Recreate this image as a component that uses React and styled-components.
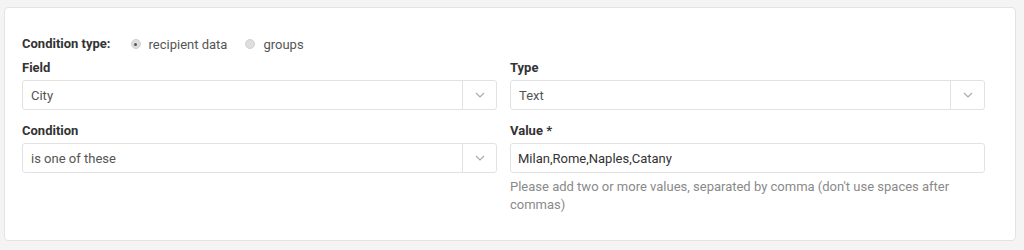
import React from "react";
import styled, { createGlobalStyle } from "styled-components";

const GlobalStyle = createGlobalStyle`
  body {
    margin: 0;
    background: #f4f4f4;
    font-family: Roboto, "Liberation Sans", sans-serif;
  }
`;

const Chevron = () => (
  <svg width="10" height="6" viewBox="0 0 10 6">
    <path d="M1 1l4 4 4-4" fill="none" stroke="#a8a8a8" strokeWidth="1.1" />
  </svg>
);

const App = () => {
  return (
    <Page>
      <GlobalStyle />
      <Card>
        <TypeRow>
          <Label>Condition type:</Label>
          <Radio>
            <RadioDot checked />
            recipient data
          </Radio>
          <Radio>
            <RadioDot />
            groups
          </Radio>
        </TypeRow>
        <Grid>
          <FieldBox>
            <Label>Field</Label>
            <Select>
              <SelectValue>City</SelectValue>
              <Arrow>
                <Chevron />
              </Arrow>
            </Select>
          </FieldBox>
          <FieldBox>
            <Label>Type</Label>
            <Select>
              <SelectValue>Text</SelectValue>
              <Arrow>
                <Chevron />
              </Arrow>
            </Select>
          </FieldBox>
          <FieldBox>
            <Label>Condition</Label>
            <Select>
              <SelectValue>is one of these</SelectValue>
              <Arrow>
                <Chevron />
              </Arrow>
            </Select>
          </FieldBox>
          <FieldBox>
            <Label>Value *</Label>
            <Input>Milan,Rome,Naples,Catany</Input>
            <Help>
              Please add two or more values, separated by comma (don't use spaces after
              commas)
            </Help>
          </FieldBox>
        </Grid>
      </Card>
    </Page>
  );
};

const Page = styled.div`
  padding: 7px 8px 9px 4px;
  height: 250px;
  box-sizing: border-box;
`;

const Card = styled.div`
  background: #fff;
  border: 1px solid #e3e3e3;
  border-radius: 4px;
  height: 234px;
  box-sizing: border-box;
  padding: 27px 30px 0 17px;
`;

const TypeRow = styled.div`
  display: flex;
  align-items: center;
  height: 18px;
  gap: 20px;
`;

const Label = styled.div`
  font-size: 13px;
  font-weight: 700;
  color: #333;
  line-height: 16px;
`;

const Radio = styled.div`
  display: flex;
  align-items: center;
  gap: 8px;
  font-size: 13px;
  color: #555;
  margin-right: -2px;
`;

const RadioDot = styled.span`
  width: 10px;
  height: 10px;
  border-radius: 50%;
  background: #dedede;
  border: 1px solid #d0d0d0;
  box-sizing: border-box;
  position: relative;
  &::after {
    content: "";
    display: ${(p) => (p.checked ? "block" : "none")};
    position: absolute;
    left: 2.5px;
    top: 2.5px;
    width: 3px;
    height: 3px;
    border-radius: 50%;
    background: #555;
  }
`;

const Grid = styled.div`
  display: grid;
  grid-template-columns: 1fr 1fr;
  column-gap: 13px;
  row-gap: 13px;
  margin-top: 7px;
`;

const FieldBox = styled.div`
  display: flex;
  flex-direction: column;
  gap: 4px;
`;

const Select = styled.div`
  display: flex;
  height: 30px;
  border: 1px solid #e2e2e2;
  border-radius: 3px;
  box-sizing: border-box;
`;

const SelectValue = styled.div`
  flex: 1;
  display: flex;
  align-items: center;
  padding-left: 8px;
  font-size: 13px;
  color: #555;
`;

const Arrow = styled.div`
  width: 33px;
  border-left: 1px solid #e2e2e2;
  display: flex;
  align-items: center;
  justify-content: center;
`;

const Input = styled.div`
  height: 30px;
  border: 1px solid #e2e2e2;
  border-radius: 3px;
  box-sizing: border-box;
  display: flex;
  align-items: center;
  padding-left: 7px;
  font-size: 13px;
  color: #333;
`;

const Help = styled.div`
  font-size: 13px;
  color: #8a8a8a;
  line-height: 18px;
  margin-top: 1px;
  padding-right: 20px;
`;

export default App;
